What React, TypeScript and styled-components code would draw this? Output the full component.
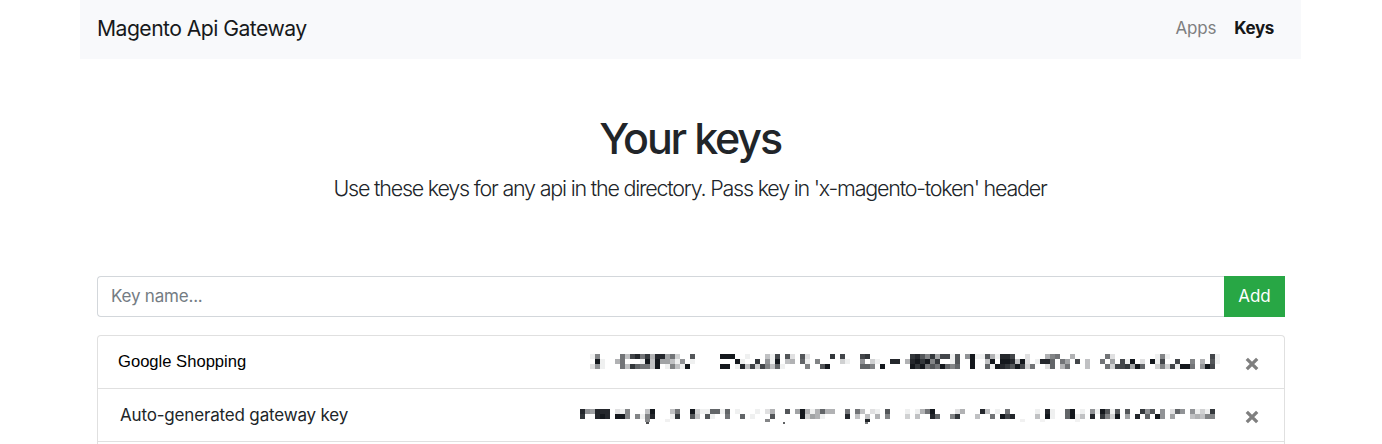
import React from "react";
import styled, { createGlobalStyle } from "styled-components";

const GlobalStyle = createGlobalStyle`
  * { box-sizing: border-box; }
  body {
    margin: 0;
    background: #fff;
    color: #212529;
    font-family: Inter, "Liberation Sans", sans-serif;
    overflow: hidden;
  }
`;

const Page = styled.div`
  width: 1221px;
  height: 444px;
  margin-left: 80px;
  overflow: hidden;
`;

const Navbar = styled.header`
  display: flex;
  align-items: center;
  justify-content: space-between;
  height: 59px;
  padding: 0 27px 3px 17px;
  background: #f8f9fb;
`;

const Brand = styled.div`
  font-size: 21.2px;
  line-height: 32px;
  letter-spacing: -0.56px;
  color: #17191b;
  white-space: nowrap;
`;

const Nav = styled.nav`
  display: flex;
  gap: 18px;
`;

const NavLink = styled.a<{ $active?: boolean }>`
  font-size: 17px;
  line-height: 26px;
  letter-spacing: ${(p) => (p.$active ? "-0.35px" : "-0.2px")};
  font-weight: ${(p) => (p.$active ? 700 : 400)};
  color: ${(p) => (p.$active ? "#161718" : "#7e7f80")};
`;

const Hero = styled.section`
  display: flex;
  flex-direction: column;
  align-items: center;
  height: 217px;
  padding: 53px 1px 0 0;
  white-space: nowrap;
`;

const Title = styled.h1`
  margin: 0;
  font-size: 43px;
  line-height: 52px;
  font-weight: 500;
  letter-spacing: -2.2px;
`;

const Lead = styled.p`
  margin: 8px 0 0;
  font-size: 21.5px;
  line-height: 32px;
  font-weight: 300;
  letter-spacing: -1.21px;
`;

const Content = styled.main`
  padding: 0 16px 0 17px;
`;

const InputGroup = styled.form`
  display: flex;
  height: 41px;
  margin-bottom: 18px;
`;

const KeyInput = styled.input`
  flex: 1;
  min-width: 0;
  padding: 0 13px 2px;
  border: 1px solid #d3d7db;
  border-right: 0;
  border-radius: 4px 0 0 4px;
  outline: 0;
  font: 400 17px Inter, sans-serif;
  letter-spacing: -0.2px;
  &::placeholder { color: #747c83; opacity: 1; }
`;

const AddButton = styled.button`
  width: 61px;
  padding: 0 0 2px;
  border: 0;
  background: #28a745;
  color: #fff;
  font: 400 17px Inter, sans-serif;
`;

const KeyList = styled.ul`
  margin: 0;
  padding: 0;
  list-style: none;
  border: 1px solid #e0e0e0;
  border-bottom: 0;
  border-radius: 4px 4px 0 0;
`;

const KeyRow = styled.li`
  display: flex;
  align-items: center;
  height: 53px;
  padding: 0 25px 0 20px;
  border-bottom: 1px solid #e0e0e0;
`;

const KeyName = styled.span<{ $plain?: boolean }>`
  flex: 1;
  padding: ${(p) => (p.$plain ? "0 0 1px" : "0 0 0 2px")};
  font-family: ${(p) => (p.$plain ? '"Liberation Sans", sans-serif' : "Inter, sans-serif")};
  font-size: ${(p) => (p.$plain ? "16.6px" : "17px")};
  letter-spacing: ${(p) => (p.$plain ? "0" : "-0.17px")};
  color: ${(p) => (p.$plain ? "#000" : "#212529")};
  white-space: nowrap;
`;

const MaskedValue = styled.svg<{ $top: number }>`
  display: block;
  align-self: flex-start;
  margin: ${(p) => p.$top}px 25px 0 0;
`;

const RemoveButton = styled.button`
  display: flex;
  width: 14px;
  height: 14px;
  margin-top: 4px;
  padding: 0;
  border: 0;
  background: none;
`;

const EmptyRow = styled.li`
  height: 20px;
`;

const CELL = 5;

/* Each hex digit is the darkness of one mosaic cell. */
const firstMask = [
  "18000094ce9d5ee69300b00000ff" + "f00100041c0b20b20000d0c000cd0000" + "0000deb8d6cc1b07f11b51eec0020005" + "8900500000092000000001810000000" + "0c1",
  "0f100590001f4f66417010000000" + "0f100d071f0450a10800003100703100" + "ee05efdf8d001b00f004f0ffe4f201ee" + "a0960c04009060c1f020f1c00c008050b1",
  "27100094da994f01841f000000ff" + "01e4c3c84a10000800bf000000aa80f0" + "0000fdf9b9fa8a00f00a1fedbfc39002" + "a059000400093ccd6fa00383c1ff907fc0",
];

const secondMask = [
  "e76eee02180004f0004900f311aa1a" + "01000102500b06f515a550090940210b" + "00010159f000025000e401090000010e" + "100af01071fb1b0b00d7b0702a707131d0",
  "d00efe0ff80818e0001d00b40b1009" + "00a01000b00000f36510000e04040508" + "00030400ea008d00040090fce000040f" + "100af140e0d83f060e0a0f706000454880",
];

const secondSpecks = [
  { x: 65, y: 10, w: 5, h: 3, c: "#88898b" },
  { x: 66, y: 13, w: 3, h: 2, c: "#4c4e50" },
  { x: 85, y: 10, w: 5, h: 3, c: "#f1f1f1" },
  { x: 185, y: 10, w: 5, h: 3, c: "#848587" },
  { x: 203, y: 13, w: 2, h: 2, c: "#606264" },
  { x: 285, y: 10, w: 5, h: 3, c: "#202428" },
  { x: 285, y: 13, w: 3, h: 2, c: "#77797b" },
  { x: 440, y: 10, w: 5, h: 3, c: "#f1f1f1" },
  { x: 460, y: 10, w: 5, h: 3, c: "#f3f3f3" },
  { x: 495, y: 10, w: 5, h: 3, c: "#f2f2f2" },
];

const shade = (digit: string) => {
  const t = parseInt(digit, 16) / 15;
  const mix = (dark: number) => Math.round(255 - (255 - dark) * t);
  return `rgb(${mix(20)},${mix(24)},${mix(29)})`;
};

type Speck = { x: number; y: number; w: number; h: number; c: string };

function Mosaic({ rows, top, specks = [] }: { rows: string[]; top: number; specks?: Speck[] }) {
  return (
    <MaskedValue $top={top} width={rows[0].length * CELL} height={15} shapeRendering="crispEdges" aria-hidden>
      {rows.flatMap((row, y) =>
        row.split("").map((digit, x) =>
          digit === "0" ? null : (
            <rect key={`${x}-${y}`} x={x * CELL} y={y * CELL} width={CELL} height={CELL} fill={shade(digit)} />
          )
        )
      )}
      {specks.map((s) => (
        <rect key={`s${s.x}-${s.y}`} x={s.x} y={s.y} width={s.w} height={s.h} fill={s.c} />
      ))}
    </MaskedValue>
  );
}

function Remove() {
  return (
    <RemoveButton type="button" aria-label="Remove key">
      <svg width="14" height="14" viewBox="0 0 14 14">
        <path d="M1.8 1.8 12.2 12.2M12.2 1.8 1.8 12.2" stroke="#7f7f7f" strokeWidth="3.3" />
      </svg>
    </RemoveButton>
  );
}

export default function App() {
  return (
    <Page>
      <GlobalStyle />
      <Navbar>
        <Brand>Magento Api Gateway</Brand>
        <Nav>
          <NavLink>Apps</NavLink>
          <NavLink $active>Keys</NavLink>
        </Nav>
      </Navbar>
      <Hero>
        <Title>Your keys</Title>
        <Lead>Use these keys for any api in the directory. Pass key in 'x-magento-token' header</Lead>
      </Hero>
      <Content>
        <InputGroup>
          <KeyInput placeholder="Key name..." />
          <AddButton type="button">Add</AddButton>
        </InputGroup>
        <KeyList>
          <KeyRow>
            <KeyName $plain>Google Shopping</KeyName>
            <Mosaic rows={firstMask} top={18} />
            <Remove />
          </KeyRow>
          <KeyRow>
            <KeyName>Auto-generated gateway key</KeyName>
            <Mosaic rows={secondMask} top={20} specks={secondSpecks} />
            <Remove />
          </KeyRow>
          <EmptyRow />
        </KeyList>
      </Content>
    </Page>
  );
}
